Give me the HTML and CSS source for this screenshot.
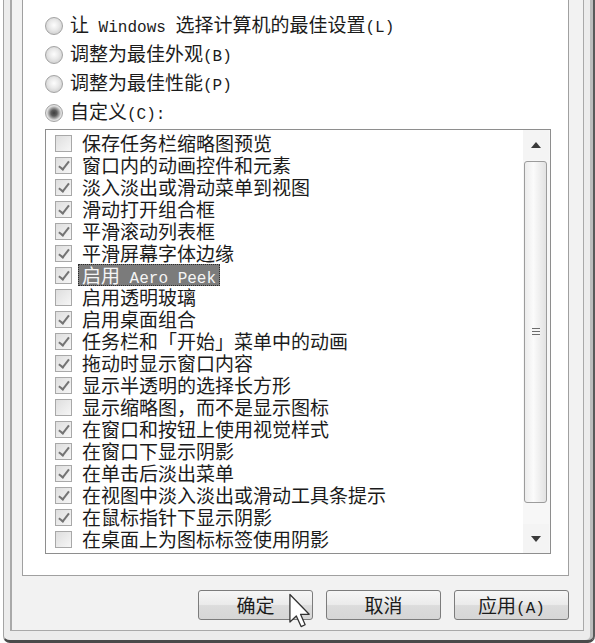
FILE: index.html
```html
<!DOCTYPE html>
<html lang="zh-CN">
<head>
    <meta charset="UTF-8">
    <title>性能选项</title>
    <link rel="stylesheet" href="styles.css">
</head>
<body>

    <div class="frame">
        <div class="client">
            <div class="panel">
                <div class="radio-row"><span class="radio"></span><span>让<span class="en"> Windows </span>选择计算机的最佳设置<span class="en">(L)</span></span></div>
                <div class="radio-row"><span class="radio"></span><span>调整为最佳外观<span class="en">(B)</span></span></div>
                <div class="radio-row"><span class="radio"></span><span>调整为最佳性能<span class="en">(P)</span></span></div>
                <div class="radio-row"><span class="radio on"></span><span>自定义<span class="en">(C):</span></span></div>

                <div class="listbox">
                    <div class="items">
                        <div class="item"><span class="cb"></span><span class="label">保存任务栏缩略图预览</span></div>
                        <div class="item"><span class="cb on"></span><span class="label">窗口内的动画控件和元素</span></div>
                        <div class="item"><span class="cb on"></span><span class="label">淡入淡出或滑动菜单到视图</span></div>
                        <div class="item"><span class="cb on"></span><span class="label">滑动打开组合框</span></div>
                        <div class="item"><span class="cb on"></span><span class="label">平滑滚动列表框</span></div>
                        <div class="item"><span class="cb on"></span><span class="label">平滑屏幕字体边缘</span></div>
                        <div class="item"><span class="cb on"></span><span class="label focus">启用<span class="en"> Aero Peek</span></span></div>
                        <div class="item"><span class="cb"></span><span class="label">启用透明玻璃</span></div>
                        <div class="item"><span class="cb on"></span><span class="label">启用桌面组合</span></div>
                        <div class="item"><span class="cb on"></span><span class="label">任务栏和「开始」菜单中的动画</span></div>
                        <div class="item"><span class="cb on"></span><span class="label">拖动时显示窗口内容</span></div>
                        <div class="item"><span class="cb on"></span><span class="label">显示半透明的选择长方形</span></div>
                        <div class="item"><span class="cb"></span><span class="label">显示缩略图，而不是显示图标</span></div>
                        <div class="item"><span class="cb on"></span><span class="label">在窗口和按钮上使用视觉样式</span></div>
                        <div class="item"><span class="cb on"></span><span class="label">在窗口下显示阴影</span></div>
                        <div class="item"><span class="cb on"></span><span class="label">在单击后淡出菜单</span></div>
                        <div class="item"><span class="cb on"></span><span class="label">在视图中淡入淡出或滑动工具条提示</span></div>
                        <div class="item"><span class="cb on"></span><span class="label">在鼠标指针下显示阴影</span></div>
                        <div class="item"><span class="cb"></span><span class="label">在桌面上为图标标签使用阴影</span></div>
                    </div>
                    <div class="scrollbar">
                        <div class="sb-btn"><span class="arrow-up"></span></div>
                        <div class="thumb"><span class="grip"></span></div>
                        <div class="sb-btn down"><span class="arrow-down"></span></div>
                    </div>
                </div>
            </div>

            <div class="buttons">
                <button class="btn">确定</button>
                <button class="btn">取消</button>
                <button class="btn">应用<span class="en">(A)</span></button>
            </div>
        </div>
    </div>

    <!-- 鼠标指针 -->
    <svg class="cursor" width="22" height="36" viewBox="0 0 12 19">
        <path d="M0.5 0.5 L0.5 15.5 L4 12.2 L6.6 18 L8.8 17 L6.3 11.3 L11 11.3 Z" fill="#fff" stroke="#333" stroke-width="0.7" stroke-linejoin="round"/>
    </svg>

</body>
</html>
```

FILE: styles.css
```css
/* 整体窗口 */
body {
    margin: 0;
    background: #fff;
    font-family: "Noto Sans CJK SC", "Liberation Sans", sans-serif;
    font-size: 19px;
    color: #1b1b1b;
    width: 595px;
    height: 643px;
    overflow: hidden;
}

.en {
    font-family: "Liberation Mono", "Noto Sans CJK SC", monospace;
    font-size: 16px;
}

.frame {
    margin-left: 3px;
    border-left: 1px solid #a4a4a4;
    border-right: 2px solid #5a5a5a;
    border-bottom: 3px solid #4a4a4a;
    border-bottom-left-radius: 7px;
    border-bottom-right-radius: 7px;
    background: #ececec;
    padding: 0 9px 9px 6px;
    box-shadow: inset -3px 0 0 #bdbdbd;
}

.client {
    border-left: 2px solid #a9a9a9;
    border-right: 1px solid #a9a9a9;
    border-bottom: 1px solid #a9a9a9;
    background: #f2f2f2;
    padding: 0 14px 0 10px;
}

/* 选项卡面板 */
.panel {
    background: #fff;
    border-left: 1px solid #a0a0a0;
    border-right: 1px solid #a0a0a0;
    border-bottom: 1px solid #a0a0a0;
    padding: 11px 17px 21px 22px;
}

.radio-row {
    display: flex;
    align-items: center;
    gap: 7px;
    height: 29px;
    line-height: 29px;
    white-space: nowrap;
}

.radio {
    width: 18px;
    height: 18px;
    box-sizing: border-box;
    border-radius: 50%;
    border: 1px solid #a3a3a3;
    background: radial-gradient(circle at 50% 45%, #fdfdfd 0, #e9e9e9 5px, #d2d2d2 9px);
    flex-shrink: 0;
}

.radio.on {
    background: radial-gradient(circle at 50% 50%, #3e3e3e 0, #5d5d5d 3px, #9a9a9a 5px, #dcdcdc 7px, #eeeeee 9px);
}

/* 列表框 */
.listbox {
    margin-top: 2px;
    height: 425px;
    box-sizing: border-box;
    border: 1px solid #8e8e8e;
    display: flex;
}

.items {
    flex: 1;
    padding-top: 2px;
}

.item {
    display: flex;
    align-items: center;
    height: 22px;
    padding-left: 9px;
    white-space: nowrap;
}

.cb {
    position: relative;
    width: 17px;
    height: 17px;
    box-sizing: border-box;
    border: 1px solid #a8a8a8;
    background: linear-gradient(135deg, #dedede, #f6f6f6);
    flex-shrink: 0;
}

.cb.on::after {
    content: "";
    position: absolute;
    left: 5px;
    top: 1px;
    width: 4px;
    height: 9px;
    border: solid #747474;
    border-width: 0 2px 2px 0;
    transform: rotate(38deg);
}

.label {
    margin-left: 6px;
    padding: 0 3px;
    height: 20px;
    line-height: 20px;
    border: 1px dotted transparent;
}

.label.focus {
    background: #7b7b7b;
    color: #f4f4f4;
    border-color: #2c2c2c;
}

/* 滚动条 */
.scrollbar {
    width: 26px;
    background: #f7f7f7;
    display: flex;
    flex-direction: column;
    padding-right: 1px;
}

.sb-btn {
    height: 30px;
    display: flex;
    align-items: center;
    justify-content: center;
    background: #f4f4f4;
}

.sb-btn.down {
    margin-top: auto;
    height: 29px;
}

.arrow-up {
    width: 0;
    height: 0;
    border-left: 5px solid transparent;
    border-right: 5px solid transparent;
    border-bottom: 6px solid #3a3a3a;
}

.arrow-down {
    width: 0;
    height: 0;
    border-left: 5px solid transparent;
    border-right: 5px solid transparent;
    border-top: 6px solid #3a3a3a;
}

.thumb {
    height: 342px;
    margin: 1px 2px 0 1px;
    box-sizing: border-box;
    border: 1px solid #9c9c9c;
    border-radius: 3px;
    background: linear-gradient(90deg, #ececec, #fbfbfb 40%, #e2e2e2);
    display: flex;
    align-items: center;
    justify-content: center;
}

.grip {
    width: 8px;
    height: 9px;
    background: repeating-linear-gradient(180deg, #6d6d6d 0 1px, #f6f6f6 1px 3px);
}

/* 底部按钮 */
.buttons {
    display: flex;
    justify-content: flex-end;
    gap: 13px;
    padding: 14px 0 10px 0;
}

.btn {
    width: 115px;
    height: 30px;
    border: 1px solid #7c7c7c;
    border-radius: 3px;
    background: linear-gradient(180deg, #f6f6f6 0%, #ebebeb 48%, #dcdcdc 52%, #d6d6d6 100%);
    font-family: "Noto Sans CJK SC", sans-serif;
    font-size: 19px;
    color: #1b1b1b;
    padding: 0;
    line-height: 28px;
}

.cursor {
    position: absolute;
    left: 289px;
    top: 593px;
}
```
